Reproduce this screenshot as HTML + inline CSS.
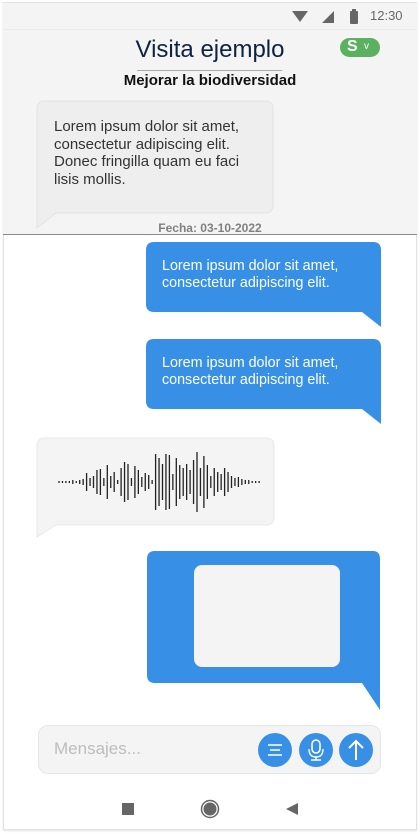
<!DOCTYPE html>
<html><head><meta charset="utf-8"><style>
*{margin:0;padding:0;box-sizing:border-box}
body{width:420px;height:834px;background:#fff;position:relative;overflow:hidden;font-family:"Liberation Sans",sans-serif}
.frame{position:absolute;left:3px;top:2px;width:414px;height:828px;border:1px solid #e2e2e2;background:#fff;box-shadow:0 1px 2px rgba(0,0,0,.12)}
.abs{position:absolute}
.status{left:3px;top:3px;width:414px;height:27px;background:#f4f4f4;border-bottom:1px solid #e9e9e9}
.head{left:3px;top:30px;width:414px;height:205px;background:#f4f4f4;border-bottom:1px solid #8a8a8a}
.txt{font-size:15px;line-height:17.5px;color:#333;white-space:nowrap}
.bt{font-size:14.3px;line-height:17px;color:#fff;white-space:nowrap}
</style></head><body>
<div class="frame"></div>
<div class="abs status"></div>
<div class="abs head"></div>
<svg class="abs" style="left:290px;top:8px" width="80" height="18">
<path d="M2 3 L18 3 L10 14 Z" fill="#666"/>
<path d="M32 15 L44 15 L44 3 Z" fill="#666"/>
<rect x="60" y="3" width="8" height="13" rx="1" fill="#666"/><rect x="62" y="1" width="4" height="3" fill="#666"/>
</svg>
<div class="abs" style="left:370px;top:8px;font-size:13px;color:#666">12:30</div>
<div class="abs" style="left:0;width:420px;top:36px;text-align:center;font-size:24px;color:#0e2340">Visita ejemplo</div>
<div class="abs" style="left:137px;top:70px;width:145px;height:1px;background:#aaa"></div>
<div class="abs" style="left:0;width:420px;top:72px;text-align:center;font-size:15px;font-weight:bold;color:#111">Mejorar la biodiversidad</div>
<div class="abs" style="left:340px;top:38px;width:40px;height:19px;border-radius:10px;background:#5cb160;color:#fff"><span style="position:absolute;left:7px;top:0;font-size:16px;font-weight:bold">S</span><span style="position:absolute;left:24px;top:3px;font-size:10px">v</span></div>
<svg class="abs" style="left:36px;top:100px" width="240" height="130">
<path d="M9 1 H229 Q237 1 237 9 V105 Q237 113 229 113 H20 L1 128 V9 Q1 1 9 1Z" fill="#eeeeee" stroke="#e3e3e3"/>
</svg>
<div class="abs txt" style="left:54px;top:118px">Lorem ipsum dolor sit amet,<br>consectetur adipiscing elit.<br>Donec fringilla quam eu faci<br>lisis mollis.</div>
<div class="abs" style="left:0;width:420px;top:221px;text-align:center;font-size:12px;color:#808080;font-weight:bold">Fecha: 03-10-2022</div>
<svg class="abs" style="left:146px;top:242px" width="236" height="86"><path d="M8 0 H227 Q235 0 235 8 V85 L216 70 H8 Q0 70 0 62 V8 Q0 0 8 0Z" fill="#3790e6"/></svg>
<div class="abs bt" style="left:162px;top:258px">Lorem ipsum dolor sit amet,<br>consectetur adipiscing elit.</div>
<svg class="abs" style="left:146px;top:339px" width="236" height="86"><path d="M8 0 H227 Q235 0 235 8 V85 L216 70 H8 Q0 70 0 62 V8 Q0 0 8 0Z" fill="#3790e6"/></svg>
<div class="abs bt" style="left:162px;top:355px">Lorem ipsum dolor sit amet,<br>consectetur adipiscing elit.</div>
<svg class="abs" style="left:36px;top:437px" width="242" height="102">
<path d="M9 1 H230 Q238 1 238 9 V80 Q238 88 230 88 H20 L1 100 V9 Q1 1 9 1Z" fill="#f4f4f4" stroke="#e8e8e8"/>
<g id="w" stroke="#222" stroke-width="1.3"></g>
</svg>
<svg class="abs" style="left:147px;top:551px" width="236" height="162"><path d="M8 0 H226 Q233 0 233 8 V159 L215 132 H8 Q0 132 0 124 V8 Q0 0 8 0Z" fill="#3790e6"/></svg>
<div class="abs" style="left:194px;top:565px;width:146px;height:102px;background:#f4f4f4;border-radius:8px"></div>
<div class="abs" style="left:38px;top:725px;width:343px;height:49px;background:#f4f4f4;border:1px solid #e6e6e6;border-radius:10px"></div>
<div class="abs" style="left:54px;top:739px;font-size:17px;color:#bdbdbd">Mensajes...</div>
<svg class="abs" style="left:250px;top:730px" width="130" height="40">
<circle cx="25" cy="20" r="17" fill="#3790e6"/><circle cx="66" cy="20" r="17" fill="#3790e6"/><circle cx="106" cy="20" r="17" fill="#3790e6"/>
<path d="M18 15 H32 M20 20 H30 M18 25 H32" stroke="#fff" stroke-width="1.4"/>
<rect x="62" y="10" width="8" height="13" rx="4" fill="none" stroke="#fff" stroke-width="1.6"/>
<path d="M59 19 Q59 27 66 27 Q73 27 73 19 M66 27 V30 M61 30 H71" fill="none" stroke="#fff" stroke-width="1.4"/>
<path d="M106 30 V11 M99 18 L106 11 L113 18" fill="none" stroke="#fff" stroke-width="2"/>
</svg>
<svg class="abs" style="left:110px;top:795px" width="200" height="30">
<rect x="12" y="8" width="12" height="12" fill="#666"/>
<circle cx="100" cy="14" r="8.5" fill="none" stroke="#666" stroke-width="1.5"/><circle cx="100" cy="14" r="6.5" fill="#666"/>
<path d="M188 8 V20 L176 14Z" fill="#666"/>
</svg>
<script>
var h=[1,1,1,1,2,1,2,3,9,4,6,12,13,4,17,6,10,2,14,20,18,4,16,12,5,9,7,2,28,24,18,28,27,8,24,17,14,18,12,22,30,14,26,17,6,14,10,8,14,10,6,4,5,3,2,2,1,1,1];
var g=document.getElementById('w'),s='';
for(var i=0;i<h.length;i++){var x=23+i*3.45;s+='<line x1="'+x+'" x2="'+x+'" y1="'+(45-h[i])+'" y2="'+(45+h[i])+'"/>';}
g.innerHTML=s;
</script>
</body></html>
